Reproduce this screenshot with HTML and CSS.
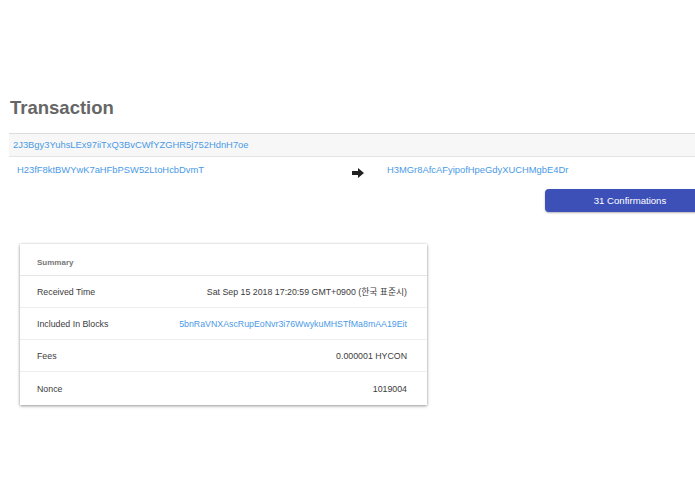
FILE: index.html
```html
<!DOCTYPE html>
<html lang="en">
<head>
    <meta charset="UTF-8">
    <title>Transaction</title>
    <link rel="stylesheet" href="styles.css">
</head>
<body>
    <div class="page">
        <h1 class="title">Transaction</h1>
        <div class="tx-hash">
            <a href="#">2J3Bgy3YuhsLEx97iiTxQ3BvCWfYZGHR5j752HdnH7oe</a>
        </div>
        <div class="tx-flow">
            <a class="from" href="#">H23fF8ktBWYwK7aHFbPSW52LtoHcbDvmT</a>
            <svg class="arrow" width="12" height="10" viewBox="0 0 12 10">
                <path d="M0 3 H6 V0 L12 5 L6 10 V7 H0 Z" fill="#222"/>
            </svg>
            <a class="to" href="#">H3MGr8AfcAFyipofHpeGdyXUCHMgbE4Dr</a>
        </div>
        <div class="confirm-row">
            <button class="confirm-btn">31 Confirmations</button>
        </div>

        <div class="card">
            <div class="card-head">Summary</div>
            <div class="card-row">
                <span>Received Time</span>
                <span>Sat Sep 15 2018 17:20:59 GMT+0900 (한국 표준시)</span>
            </div>
            <div class="card-row">
                <span>Included In Blocks</span>
                <a href="#">5bnRaVNXAscRupEoNvr3i76WwykuMHSTfMa8mAA19Eit</a>
            </div>
            <div class="card-row">
                <span>Fees</span>
                <span>0.000001 HYCON</span>
            </div>
            <div class="card-row">
                <span>Nonce</span>
                <span>1019004</span>
            </div>
        </div>
    </div>
</body>
</html>
```

FILE: styles.css
```css
body {
    margin: 0;
    font-family: "Liberation Sans", Arial, "Noto Sans CJK KR", sans-serif;
    background: #fff;
    color: #333;
}
a {
    color: #4a9ae6;
    text-decoration: none;
}
.page {
    overflow-x: hidden;
    padding: 97px 0 40px 9px;
}
.title {
    margin: 0 0 0 1px;
    font-size: 18.5px;
    line-height: 21px;
    font-weight: bold;
    color: #666;
}
.tx-hash {
    margin-top: 15px;
    height: 22px;
    line-height: 22px;
    padding-left: 4px;
    font-size: 9.4px;
    background: #f7f7f7;
    border-top: 1px solid #ddd;
    border-bottom: 1px solid #e4e4e4;
}
.tx-flow {
    display: flex;
    align-items: center;
    height: 24px;
    padding-left: 8px;
    font-size: 9.4px;
}
.tx-flow .from {
    width: 335px;
}
.tx-flow .arrow {
    margin-top: 7px;
}
.tx-flow .to {
    margin-left: 23px;
}
.confirm-row {
    display: flex;
    justify-content: flex-end;
    margin-top: 8px;
}
.confirm-btn {
    flex: none;
    width: 170px;
    height: 23px;
    margin-right: -20px;
    border: none;
    border-radius: 4px;
    background: #3d50b8;
    color: #fff;
    font-family: inherit;
    font-size: 9.6px;
    box-shadow: 0 1px 2px rgba(0, 0, 0, 0.3);
}
.card {
    width: 407px;
    margin: 32px 0 0 11px;
    background: #fff;
    box-shadow: 0 1px 3px rgba(0, 0, 0, 0.4), 0 0 2px rgba(0, 0, 0, 0.1);
}
.card-head {
    height: 31px;
    line-height: 37px;
    padding-left: 17px;
    font-size: 8px;
    font-weight: bold;
    color: #777;
    border-bottom: 1px solid #e6e6e6;
}
.card-row {
    display: flex;
    justify-content: space-between;
    align-items: center;
    height: 31px;
    padding: 0 20px 0 17px;
    font-size: 8.8px;
    color: #3c3c3c;
    border-bottom: 1px solid #eee;
}
.card-row:last-child {
    height: 33px;
    border-bottom: none;
}
```
